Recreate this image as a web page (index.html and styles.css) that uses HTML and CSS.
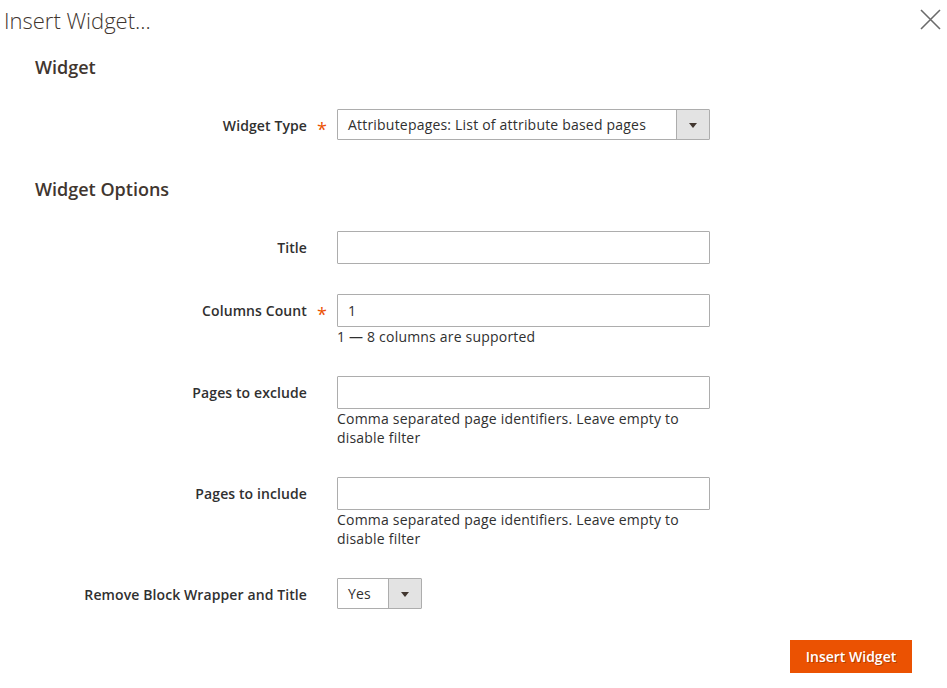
FILE: index.html
```html
<!DOCTYPE html>
<html lang="en">
<head>
<meta charset="utf-8">
<title>Insert Widget...</title>
<link rel="stylesheet" href="styles.css">
</head>
<body>
<div class="modal">
  <header class="modal-header">
    <h1 class="modal-title">Insert Widget...</h1>
    <button class="close" type="button" aria-label="Close">
      <svg width="21" height="21" viewBox="0 0 21 21"><path d="M1 1 L20 20 M20 1 L1 20" stroke="#6b6b6b" stroke-width="1.6" fill="none"/></svg>
    </button>
  </header>

  <section class="section section-first">
    <h2 class="section-title first">Widget</h2>
    <div class="field">
      <label class="label">Widget Type</label>
      <span class="req">*</span>
      <div class="control">
        <div class="select select-wide">
          <span class="select-value">Attributepages: List of attribute based pages</span>
          <span class="select-arrow"><span class="tri"></span></span>
        </div>
      </div>
    </div>
  </section>

  <section class="section">
    <h2 class="section-title second">Widget Options</h2>
    <div class="field">
      <label class="label">Title</label>
      <span class="req"></span>
      <div class="control"><input class="input" type="text" value=""></div>
    </div>
    <div class="field">
      <label class="label">Columns Count</label>
      <span class="req">*</span>
      <div class="control">
        <input class="input" type="text" value="1">
        <div class="note">1 — 8 columns are supported</div>
      </div>
    </div>
    <div class="field">
      <label class="label">Pages to exclude</label>
      <span class="req"></span>
      <div class="control">
        <input class="input" type="text" value="">
        <div class="note">Comma separated page identifiers. Leave empty to disable filter</div>
      </div>
    </div>
    <div class="field">
      <label class="label">Pages to include</label>
      <span class="req"></span>
      <div class="control">
        <input class="input" type="text" value="">
        <div class="note">Comma separated page identifiers. Leave empty to disable filter</div>
      </div>
    </div>
    <div class="field last">
      <label class="label">Remove Block Wrapper and Title</label>
      <span class="req"></span>
      <div class="control">
        <div class="select select-small">
          <span class="select-value">Yes</span>
          <span class="select-arrow"><span class="tri"></span></span>
        </div>
      </div>
    </div>
  </section>

  <div class="actions">
    <button class="primary" type="button">Insert Widget</button>
  </div>
</div>
</body>
</html>
```

FILE: styles.css
```css
* { box-sizing: border-box; }

html, body {
  margin: 0;
  padding: 0;
  background: #ffffff;
}

body {
  font-family: "Open Sans", "Liberation Sans", sans-serif;
  font-size: 14px;
  color: #303030;
  width: 947px;
  height: 688px;
  overflow: hidden;
}

.modal-header {
  display: flex;
  justify-content: space-between;
  align-items: flex-start;
  height: 33px;
  padding: 7px 6px 0 4px;
}

.modal-title {
  margin: 0;
  font-size: 22px;
  font-weight: 300;
  line-height: 26px;
  color: #41362f;
}

.close {
  border: 0;
  background: transparent;
  padding: 0;
  margin-top: 2px;
  width: 21px;
  height: 21px;
  cursor: pointer;
}

.close svg { display: block; }

.section-title {
  margin: 0;
  padding-left: 35px;
  font-size: 18px;
  font-weight: 600;
  line-height: 20px;
  color: #41362f;
}

.section-title.first { margin-top: 24px; margin-bottom: 32px; }
.section-title.second { margin-top: 39px; margin-bottom: 32px; }

.field {
  display: grid;
  grid-template-columns: 307px 30px 373px;
  align-items: start;
  margin-bottom: 30px;
}

.field.last { margin-bottom: 31px; }

.section-first .field { margin-bottom: 0; }

.label {
  text-align: right;
  font-weight: 600;
  font-size: 14px;
  line-height: 19px;
  padding-top: 7px;
  letter-spacing: 0.1px;
  color: #303030;
}

.req {
  height: 31px;
  text-align: center;
  color: #eb5202;
  font-size: 18px;
  line-height: 33px;
  padding-top: 4px;
  overflow: visible;
}

.control { min-width: 0; }

.input {
  display: block;
  width: 373px;
  height: 33px;
  border: 1px solid #adadad;
  border-radius: 1px;
  padding: 0 10px;
  font-family: "Open Sans", "Liberation Sans", sans-serif;
  font-size: 14px;
  letter-spacing: 0.2px;
  color: #303030;
  background: #ffffff;
  outline: none;
}

.note {
  font-size: 14px;
  line-height: 19px;
  letter-spacing: 0.2px;
  color: #303030;
}

.select {
  display: flex;
  height: 31px;
  border: 1px solid #adadad;
  border-radius: 1px;
  background: #ffffff;
}

.select-wide { width: 373px; }
.select-small { width: 85px; }

.select-value {
  flex: 1;
  padding-left: 10px;
  line-height: 29px;
  font-size: 14px;
  letter-spacing: 0.2px;
  color: #303030;
  white-space: nowrap;
}

.select-arrow {
  width: 33px;
  border-left: 1px solid #adadad;
  background: #e3e3e3;
  display: flex;
  align-items: center;
  justify-content: center;
}

.tri {
  width: 0;
  height: 0;
  border-left: 4px solid transparent;
  border-right: 4px solid transparent;
  border-top: 5px solid #41362f;
  margin-top: 1px;
}

.actions {
  display: flex;
  justify-content: flex-end;
  padding-right: 35px;
}

.primary {
  width: 122px;
  height: 33px;
  border: 0;
  border-radius: 0;
  background: #eb5202;
  color: #ffffff;
  font-family: "Open Sans", "Liberation Sans", sans-serif;
  font-size: 14px;
  font-weight: 600;
  text-shadow: 1px 1px 0 rgba(0, 0, 0, 0.25);
  padding: 0;
  cursor: pointer;
}
```
